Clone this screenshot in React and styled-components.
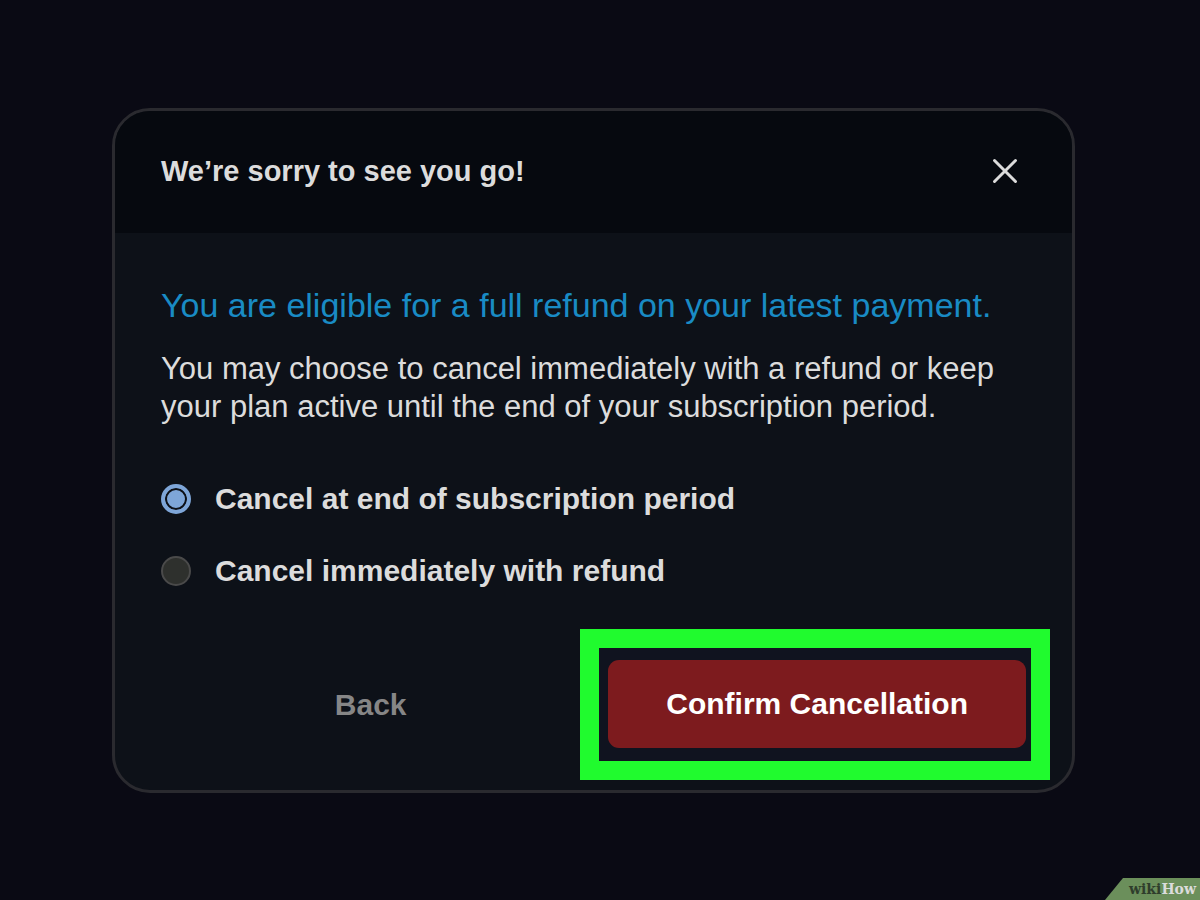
import React, { useState } from 'react'
import styled, { createGlobalStyle } from 'styled-components';

const options = [
    { id: 'period-end', label: 'Cancel at end of subscription period' },
    { id: 'immediate', label: 'Cancel immediately with refund' },
]

function App() {
    const [selected, setSelected] = useState('period-end')

    return (
        <>
            <GlobalStyle />
            <PageStyled>
                <DialogStyled role="dialog" aria-labelledby="dialog-title">
                    <HeaderStyled>
                        <TitleStyled id="dialog-title">We’re sorry to see you go!</TitleStyled>
                        <CloseButton type="button" aria-label="Close">
                            <svg width="26" height="26" viewBox="0 0 26 26" fill="none" stroke="currentColor" strokeWidth="3" strokeLinecap="round">
                                <path d="M2.5 2.5 L23.5 23.5 M23.5 2.5 L2.5 23.5" />
                            </svg>
                        </CloseButton>
                    </HeaderStyled>

                    <BodyStyled>
                        <RefundNotice>You are eligible for a full refund on your latest payment.</RefundNotice>
                        <Description>
                            You may choose to cancel immediately with a refund or keep your plan active until the end of your subscription period.
                        </Description>
                        <OptionList>
                            {
                                options.map((option) => {
                                    return <Option key={option.id} htmlFor={option.id}>
                                        <Radio
                                            type="radio"
                                            name="cancel"
                                            id={option.id}
                                            checked={selected === option.id}
                                            onChange={() => setSelected(option.id)}
                                        />
                                        {option.label}
                                    </Option>
                                })
                            }
                        </OptionList>
                    </BodyStyled>

                    <FooterStyled>
                        <BackCell>
                            <BackButton type="button">Back</BackButton>
                        </BackCell>
                        <Highlight>
                            <ConfirmButton type="button">Confirm Cancellation</ConfirmButton>
                        </Highlight>
                    </FooterStyled>
                </DialogStyled>
            </PageStyled>
            <Watermark><span>wiki</span>How</Watermark>
        </>
    )
}

const GlobalStyle = createGlobalStyle`
    *{
        box-sizing: border-box;
    }
    body{
        margin: 0;
        background: #0a0a14;
        color: #dcdcdc;
        font-family: "Liberation Sans", Arial, sans-serif;
    }
    h1, h2, p{
        margin: 0;
    }
    button{
        font-family: inherit;
        border: none;
        padding: 0;
        cursor: pointer;
    }
`;

const PageStyled = styled.main`
    padding: 108px 125px 0 112px;
`;

const DialogStyled = styled.section`
    border: 3px solid #2a2a2f;
    border-radius: 38px;
    background: #0d1118;
    overflow: hidden;
`;

const HeaderStyled = styled.header`
    display: flex;
    align-items: center;
    justify-content: space-between;
    padding: 41px 54px 43px 46px;
    background: #06090f;
`;

const TitleStyled = styled.h1`
    font-size: 29px;
    line-height: 38px;
    font-weight: 700;
`;

const CloseButton = styled.button`
    display: flex;
    background: none;
    color: #dcdcdc;
`;

const BodyStyled = styled.div`
    padding: 52px 46px 0;
`;

const RefundNotice = styled.h2`
    font-size: 34px;
    line-height: 40px;
    font-weight: 400;
    color: #198bc4;
`;

const Description = styled.p`
    margin-top: 25px;
    font-size: 31px;
    line-height: 38px;
`;

const OptionList = styled.div`
    display: flex;
    flex-flow: column;
    gap: 34px;
    margin-top: 54px;
`;

const Option = styled.label`
    display: flex;
    align-items: center;
    gap: 24px;
    font-size: 30px;
    line-height: 38px;
    font-weight: 700;
`;

const Radio = styled.input`
    appearance: none;
    flex: none;
    width: 30px;
    height: 30px;
    margin: 0;
    border: 2px solid #4a4a4a;
    border-radius: 50%;
    background: #2e302d;
    &:checked{
        border: 4px solid #7ea6d8;
        background: #7ea6d8;
        box-shadow: inset 0 0 0 2px #0d1118;
    }
`;

const FooterStyled = styled.footer`
    display: flex;
    align-items: center;
    padding: 39px 22px 10px 46px;
`;

const BackCell = styled.div`
    flex: 1;
    display: flex;
    justify-content: center;
`;

const BackButton = styled.button`
    background: none;
    color: #868686;
    font-size: 30px;
    line-height: 38px;
    font-weight: 700;
`;

const Highlight = styled.div`
    padding: 12px 5px 13px 9px;
    border: 19px solid #20fb2e;
    background: #10131f;
`;

const ConfirmButton = styled.button`
    padding: 25px 58px;
    border-radius: 11px;
    background: #7d1b1e;
    color: #fff;
    font-size: 30px;
    line-height: 38px;
    font-weight: 700;
`;

const Watermark = styled.div`
    position: fixed;
    right: 0;
    bottom: 0;
    padding: 0 4px 0 24px;
    background: #6b8f5b;
    clip-path: polygon(18px 0, 100% 0, 100% 100%, 0 100%);
    color: #dcdcdc;
    font-family: "DejaVu Serif", serif;
    font-size: 14px;
    line-height: 22px;
    font-weight: 700;
    span{
        color: #2f3d2c;
    }
`;

export default App;
